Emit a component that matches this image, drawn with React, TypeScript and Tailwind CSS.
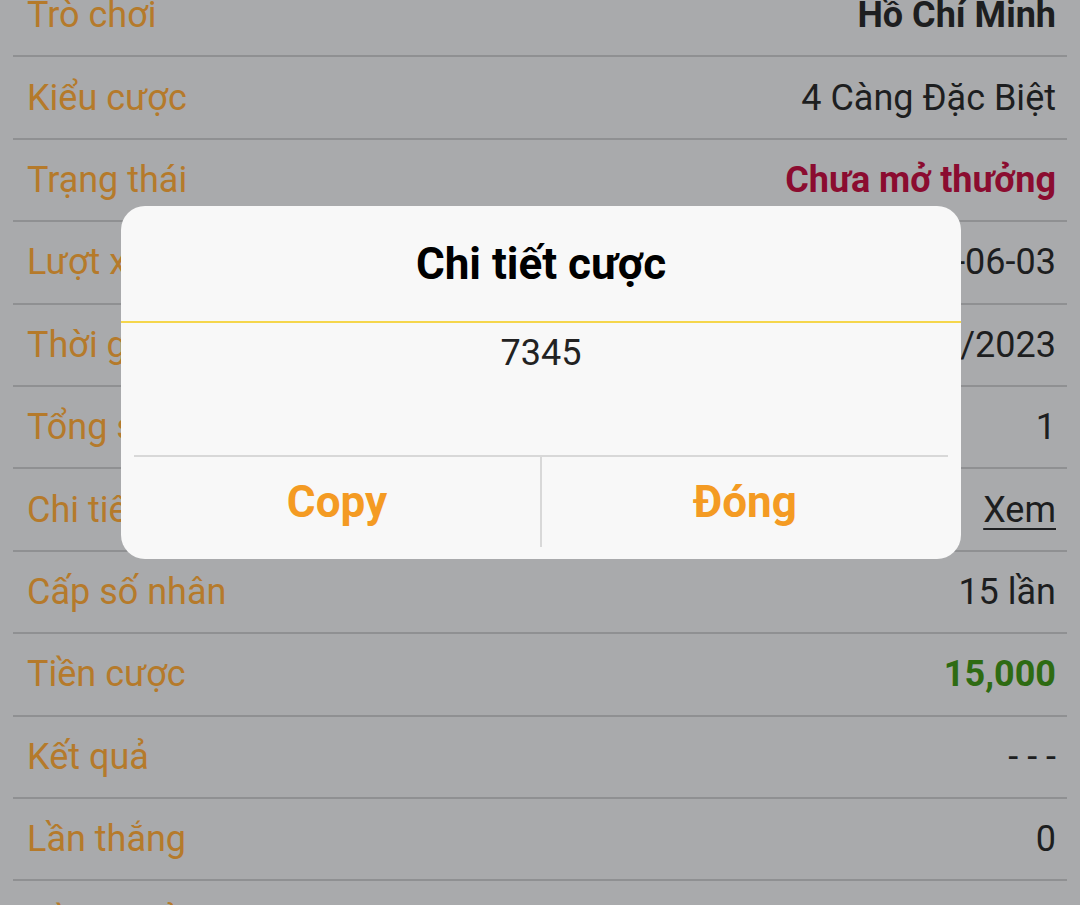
import React from "react";

type Row = {
  label: string;
  value: string;
  tone?: "bold" | "status" | "money" | "link";
};

const rows: Row[] = [
  { label: "Trò chơi", value: "Hồ Chí Minh", tone: "bold" },
  { label: "Kiểu cược", value: "4 Càng Đặc Biệt" },
  { label: "Trạng thái", value: "Chưa mở thưởng", tone: "status" },
  { label: "Lượt xổ", value: "2023-06-03" },
  { label: "Thời gian", value: "02/06/2023" },
  { label: "Tổng số cược", value: "1" },
  { label: "Chi tiết cược", value: "Xem", tone: "link" },
  { label: "Cấp số nhân", value: "15 lần" },
  { label: "Tiền cược", value: "15,000", tone: "money" },
  { label: "Kết quả", value: "- - -" },
  { label: "Lần thắng", value: "0" },
  { label: "Tiền thưởng", value: "0" },
];

const valueClass = (tone?: Row["tone"]) => {
  switch (tone) {
    case "bold":
      return "font-bold text-[#1d1e20]";
    case "status":
      return "font-bold text-[#8b0c30]";
    case "money":
      return "font-bold text-[#2e6b12]";
    case "link":
      return "text-[#1d1e20] underline decoration-2 underline-offset-[6px]";
    default:
      return "text-[#1d1e20]";
  }
};

const BetDialog: React.FC = () => {
  return (
    <div className="absolute left-[121px] top-[206px] w-[840px] h-[353px] rounded-[24px] bg-[#f8f8f8] flex flex-col">
      <div className="h-[115px] flex items-center justify-center text-[44px] font-bold text-black">
        Chi tiết cược
      </div>
      <div className="h-[2px] bg-[#f5d64c]" />
      <div className="h-[132px] pt-[9px] text-center text-[36px] leading-[42px] text-[#222]">
        7345
      </div>
      <div className="mx-[13px] flex-1 flex flex-col">
        <div className="h-[2px] bg-[#d8d8d8]" />
        <div className="h-[90px] flex">
          <button className="flex-1 flex items-center justify-center text-[44px] font-bold text-[#f49b23]">
            Copy
          </button>
          <div className="w-[2px] bg-[#d8d8d8]" />
          <button className="flex-1 flex items-center justify-center text-[44px] font-bold text-[#f49b23]">
            Đóng
          </button>
        </div>
      </div>
    </div>
  );
};

export default function App() {
  return (
    <div
      className="relative w-[1080px] h-[905px] overflow-hidden bg-[#a9aaac]"
      style={{ fontFamily: "Roboto, 'Noto Sans', sans-serif" }}
    >
      <div className="-mt-[25px] flex flex-col">
        {rows.map((row) => (
          <div
            key={row.label}
            className="mx-[13px] h-[82.4px] shrink-0 flex items-center justify-between border-b-2 border-[#8f9092] pl-[14px] pr-[11px] text-[36px]"
          >
            <span className="text-[#b57a2b]">{row.label}</span>
            <span className={valueClass(row.tone)}>{row.value}</span>
          </div>
        ))}
      </div>
      <BetDialog />
    </div>
  );
}
